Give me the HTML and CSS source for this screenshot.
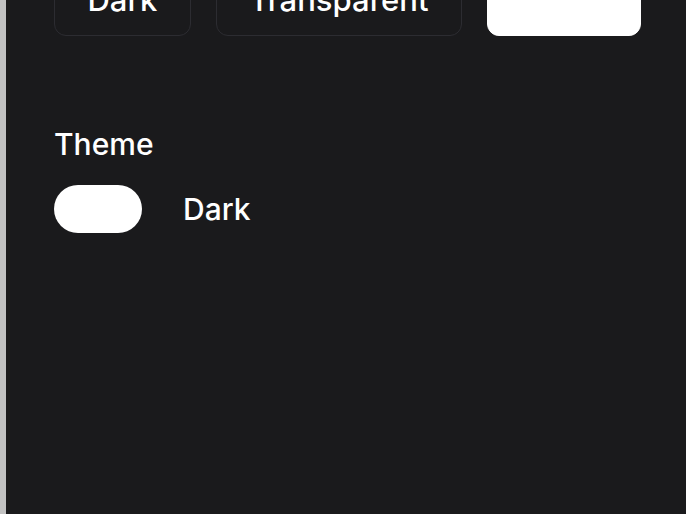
FILE: index.html
```html
<!DOCTYPE html>
<html lang="en">
<head>
    <meta charset="UTF-8">
    <meta name="viewport" content="width=device-width, initial-scale=1.0">
    <title>Appearance</title>
    <link rel="stylesheet" href="styles.css">
</head>
<body>
    <div class="sidebar-edge"></div>
    <main class="panel">
        <!-- Background options -->
        <div class="bg-options">
            <button class="bg-option">Dark</button>
            <button class="bg-option">Transparent</button>
            <button class="bg-option selected"></button>
        </div>

        <!-- Theme switch -->
        <section class="theme">
            <div class="section-title">Theme</div>
            <div class="theme-row">
                <div class="toggle"></div>
                <span class="theme-value">Dark</span>
            </div>
        </section>
    </main>
</body>
</html>
```

FILE: styles.css
```css
body {
    margin: 0;
    padding: 0;
    height: 514px;
    overflow: hidden;
    display: flex;
    font-family: Inter, "Noto Sans", sans-serif;
    background-color: #1a1a1c;
    color: #fff;
}

.sidebar-edge {
    width: 6px;
    flex-shrink: 0;
    background-color: #c2c2c2;
}

.panel {
    flex: 1;
    padding-left: 48px;
}

.bg-options {
    display: flex;
    gap: 25px;
    margin-top: -36px;
}

.bg-option {
    padding: 17px 32.5px;
    font-family: inherit;
    font-size: 31px;
    font-weight: 500;
    line-height: 36px;
    color: #fff;
    background-color: transparent;
    border: 1px solid #2c2c31;
    border-radius: 12px;
}

.bg-option.selected {
    width: 154px;
    height: 72px;
    background-color: #fff;
    border-color: #fff;
}

.theme {
    margin-top: 90px;
}

.section-title {
    font-size: 30px;
    font-weight: 500;
    line-height: 36px;
}

.theme-row {
    display: flex;
    align-items: center;
    gap: 41px;
    margin-top: 23px;
}

.toggle {
    width: 88px;
    height: 48px;
    border-radius: 24px;
    background-color: #fff;
}

.theme-value {
    font-size: 30px;
    font-weight: 500;
}
```
